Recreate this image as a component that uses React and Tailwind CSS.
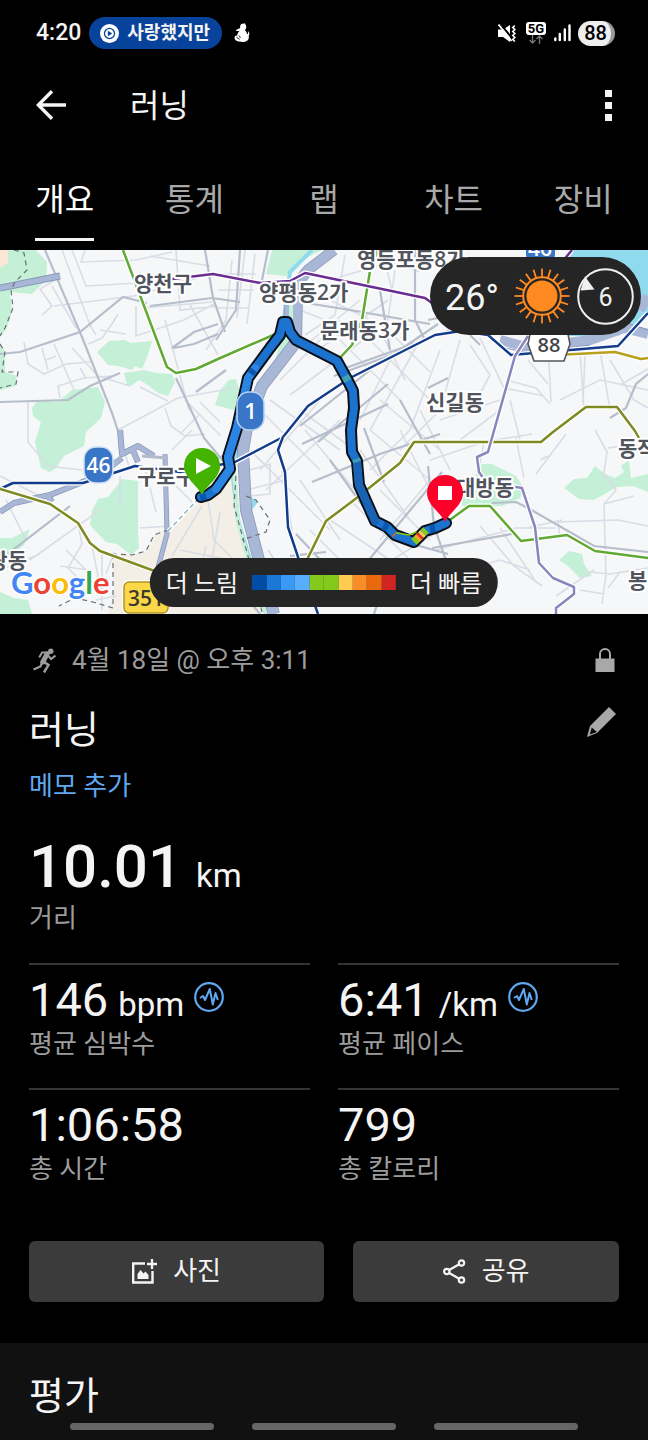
import React from "react";

const TABS = ["개요", "통계", "랩", "차트", "장비"];

const PACE_COLORS = [
  "bg-[#014da3]",
  "bg-[#1c78d6]",
  "bg-[#3a99f4]",
  "bg-[#58adff]",
  "bg-[#82cb1c]",
  "bg-[#82cb1c]",
  "bg-[#fdcc50]",
  "bg-[#f88e28]",
  "bg-[#e9690f]",
  "bg-[#d02522]",
];

const SUN_RAYS = Array.from({ length: 20 }, (_, i) => i * 18);

const ROUTE =
  "M201 247 L208 245 L216 239 L230 219 L228 207 L237 178 L248 128 L270 98 L280 85 L283 72 L287 72 L290 82 L296 90 L337 111 L348 131 L353 141 L354 158 L351 180 L352 202 L357 211 L359 235 L367 253 L375 271 L387 277 L395 285 L414 292 L425 281 L435 278 L446 273";

function StatusBar() {
  return (
    <div className="flex h-[66px] items-center justify-between pr-[33px] pl-9">
      <div className="flex items-center">
        <span className="text-[23px] font-medium">4:20</span>
        <span className="ml-2 flex h-8 items-center gap-2 rounded-full bg-[#07429b] pr-3 pl-[11px]">
          <svg className="size-[19px]" viewBox="0 0 20 20" aria-hidden="true">
            <circle cx="10" cy="10" r="10" fill="#fff" />
            <circle cx="10" cy="10" r="5.3" fill="none" stroke="#07429b" strokeWidth="1.3" />
            <path d="M8.3 7.2v5.6l4.6-2.8z" fill="#07429b" />
          </svg>
          <span className="text-lg leading-6 font-bold">사랑했지만</span>
        </span>
        <svg className="ml-3 h-5 w-[17px]" viewBox="0 0 17 20" aria-hidden="true">
          <path
            d="M6.2 2.4 7.5.8 9 .7 10.8.3 12 2.5c.8 2-.1 3.6-1.2 4.8 1.4 1 2.2 2.3 2.2 4.2 1.2-.7 1.4-1.8.8-3.4 1.8 1 2 3.4.9 5.1.8 3-1.6 5.8-6 5.8-5.2 0-8.2-1.8-8.2-4.2 0-1.6 1.2-2.3 2.8-2.2 0-1.8.8-3.2 2.2-4.5L2.5 8.1 1.9 7l4.2-1.9z"
            fill="#fff"
          />
          <path d="m2.4 14.2 3.3 2.2M5 12.5l1.5 2.5" stroke="#000" strokeWidth=".8" />
        </svg>
      </div>
      <div className="flex items-center">
        <svg className="h-[19px] w-[18px]" viewBox="0 0 18 19" aria-hidden="true">
          <path d="M0 5.500h5L12 1v17l-7-5H0z" fill="#fff" />
          <path d="M1.500-1 16 16.500" stroke="#000" strokeWidth="2" />
          <path d="m.5.5 13 16.500" stroke="#fff" strokeWidth="1.800" />
          <path d="m16.800 1.500-2 2 2 2-2 2 2 2-2 2 2 2-2 2 2 2" fill="none" stroke="#fff" strokeWidth="1.700" />
        </svg>
        <span className="ml-2.5 flex flex-col items-center">
          <span className="rounded-[3px] bg-white px-0.5 text-[13px] leading-[13px] font-bold text-black">
            5G
          </span>
          <svg className="h-[9px] w-[14px]" viewBox="0 0 14 9" aria-hidden="true">
            <path
              d="M3.5 0v8M.5 5l3 3 3-3M10.5 9V1M7.5 4l3-3 3 3"
              fill="none"
              stroke="#777"
              strokeWidth="1.3"
            />
          </svg>
        </span>
        <svg className="ml-2 h-[18px] w-[17px]" viewBox="0 0 17 18" aria-hidden="true">
          <path
            d="M1.3 14.5V16M5.8 10v6M10.800 5.500V16M15.500 1.500V16"
            stroke="#fff"
            strokeWidth="2.4"
            strokeLinecap="round"
          />
        </svg>
        <span className="ml-[7px] flex h-[25px] w-[37px] items-center justify-center rounded-full border-r-4 border-[#999] bg-[#eee] pl-0.5 text-[20px] font-medium text-black">
          88
        </span>
      </div>
    </div>
  );
}

function AppBar() {
  return (
    <header className="flex h-[78px] items-center">
      <button type="button" aria-label="뒤로" className="ml-9">
        <svg className="size-[30px]" viewBox="0 0 30 30" fill="none" stroke="#f4f4f4" strokeWidth="3.4">
          <path d="M30 15H3M16 1.3 2.3 15 16 28.7" />
        </svg>
      </button>
      <h1 className="ml-16 pt-0.5 text-[32px] leading-[48px]">러닝</h1>
      <button type="button" aria-label="더보기" className="mr-9 ml-auto flex flex-col gap-[5px]">
        <span className="size-[7px] bg-[#f4f4f4]" />
        <span className="size-[7px] bg-[#f4f4f4]" />
        <span className="size-[7px] bg-[#f4f4f4]" />
      </button>
    </header>
  );
}

function Tabs() {
  return (
    <nav className="flex pt-9 pb-[9px]">
      {TABS.map((tab, i) => (
        <button
          key={tab}
          type="button"
          aria-current={i === 0 ? "page" : undefined}
          className="flex flex-1 justify-center"
        >
          <span
            className={
              i === 0
                ? "border-b-[3px] border-[#f4f4f4] pb-[18px] text-[32px] leading-10 text-white"
                : "border-b-[3px] border-transparent pb-[18px] text-[32px] leading-10 text-[#a8a8a8]"
            }
          >
            {tab}
          </span>
        </button>
      ))}
    </nav>
  );
}

function MapDrawing() {
  return (
    <svg
      className="block h-[364px] w-full"
      viewBox="0 0 648 364"
      preserveAspectRatio="xMidYMid slice"
      role="img"
      aria-label="러닝 경로 지도"
    >
      <rect width="648" height="364" fill="#f6f7f8" />

      {/* Commercial district */}
      <path
        d="M201 248 L232 222 L236 262 L246 310 L262 364 H108 L114 340 L112 304 L132 305 L144 303 L152 292 L158 281 L170 282z"
        fill="#f4efe6"
      />
      <path d="M0 0h12l-4 14-8 6z" fill="#fbe6d6" />

      {/* Parks */}
      <g fill="#c3f0d6">
        <path d="M8 0h28l11 12-1 18-14 14-22-2 2 20-6 18-6 6V18l8-5z" />
        <path d="M0 92l5 10v20l12 4-2 10-15 4z" />
        <path d="M97 102l12-11 16-1 5 3 22-2-4 14-6 14-7-3-3 4-14-4-10-1z" />
        <path d="M124 123l20-3 12 3 16 1 3 8-7 14-10-3-10-8-9-5-8 6-4-1z" />
        <path d="M32 158l6-8 20 2 14-12 26-3 7 15-4 16-15 14-2 14-20 10-8 12-6 4-9-4-6-26 6-20-8-6z" />
        <path d="M92 261l6-12 10-2 14-18 16 2v52l1 15-8 7-14-11-11-2-16-17z" />
        <path d="M0 288l12 0 18-9-6 16-12 10-12-2z" />
        <path d="M220 140l9-10 7-1 3 10-2 22-22-6z" />
        <path d="M272 0h50l-24 12-12 14-20-2z" />
        <path d="M290 55l4-4 3 38-14 20-10 8 6-20 8-20z" />
        <path d="M463 248l19-34 10 0 24 12 8 12-4 10-18 8-40 0z" />
        <path d="M564 238l10-9 13-1 8-12 10 8 10 4 9-6-3-6 8-6 2 18 17-4v18l-15-6-16 1-14 8-10 5-14-1z" />
        <path d="M559 310l10-9 13 3 2 10 8 12-12 2-12-12z" />
        <path d="M0 342l14 6 14 2 4 14H0z" />
      </g>

      {/* Minor streets */}
      <g fill="none" stroke="#d8dde6" strokeWidth="1.6">
        <path d="M62 0l28 75 6 10M72 0l14 36 106 -6M85 0l-4 12 55-2 36-8M60 27L40 39l12 17-10 9M52 36l24 42M54 56l80 -10 70-20M150 6l60 10M176 0l4 60 38-4M136 56v30l48-16 30-16M165 70l24 90M190 55l28 50M118 64l-6 10-10 14-14 6M100 80l26 4M24 92l4 22 16 10 22-10 24 -2M42 98l6 22M54 94l20 46M46 110l10-4M72 98l26 28 32 10M60 148l-2-12 26-8 28-2M80 118l6 10M28 150v42l20 24 34 4M118 180l60-32 56 -10M140 137l28 14M165 158l6 18 14 10 20-2M185 150l36 36M200 152l20 20M142 58l70-6" />
        <path d="M232 10l-6 60-20 30M245 0l-8 68M255 4l-8 70M222 24h34M218 40h36M216 58h32M325 0l-20 30M300 20l30 10 60-18 30 10M345 5l-10 60-30 20M382 0l10 40 40 10M395 20l-10 70 20 40M300 60l50 20M310 40l80 40M300 100l60-50M318 100l70-50M340 90l60 60M360 80l70 70M380 72l50 50M280 130l60-60M290 145l80-60M300 160l60 44M270 150l70 50M260 160l60 60M250 200l80 80M320 150l-60 70M340 170l-74 70M305 180l50 60M390 110l-30 60M420 90l-50 90M440 100l-30 80-40 40M460 90l-20 70-40 40M370 180l60 50M380 150l60 50M360 200l50 70M400 180l30 60M420 160l30 60M350 250l60 60M380 240l50 50M330 270l60 40M300 230l40 60M310 280l40 40M430 230l-50 60M440 280l-80 50" />
        <path d="M470 95l20 30-16 30M480 88l24 50 40 8M506 130l30 8 14 16M528 110l20 24M549 112l2 40M585 104l-2 50M560 150l40-20 48 10M610 110l24 40 14 8M600 100l10 60M620 135l28 -16M500 160l-40 30M510 150l10 40M440 170l60-20M538 0v30M566 184l-30 40M580 100l4 60M595 180l12 22-4 26M622 196l-14 2M604 224l12 16-12 14 2 74M604 254l30 -8M540 210l8-4M480 214l4-22 48-8M430 210l60-20M524 228l-8-40M436 300l80-22 40 0M526 278l36-8M500 278l36 54M480 276l34 40 28 20M430 330l70-20 30 10M556 346l38-26M590 322l20 2 38 -6M606 324l-4 30M620 322l-12 16M580 340l24 4M560 288l-2-16 60-2 30 6" />
        <path d="M0 226l40 20M6 250l20 40M78 274l4 20-14 24 10 10M66 300l26 26M92 296l10 50M102 300v60M96 350l20-4M106 324l8-22M60 316l28 4M0 320l40-16M130 220l-6-20M120 226v30M30 310l70-50M146 222l10 40M140 278l30-2M172 200l20-20M180 184l20-20M170 230l24 24M208 250l6 40 20 20M202 256l-30 50M180 300l50 10M206 296l-12 50M220 262l-10 60 20 20M246 240l40-10M250 220l20-6v30l-20 2M282 220l10 60M268 300l20 30" />
      </g>

      {/* Main streets */}
      <g fill="none" stroke="#b6becb" strokeWidth="2.2">
        <path d="M45 0l37 87 30 76 6 18M0 104l20-2 60-20 43-35 24 6M150 56l62-8 28 4M205 0l8 48 12 34M0 152l68-2 22-14 30-13M172 98l22-16 24-8M174 98l20-4 24-10M176 128l28 60 30 36M196 142l30-22" />
        <path d="M240 0l-4 60-20 30M268 0l-6 30M300 52l50 8 80 14M415 0l0 70 10 20M340 120l90-32 20-8M334 126l60-22 44-30M300 176l70-56M318 192l70-58M244 196l-30 14-14 20M302 194l86-40M312 232l68-28 60-20M364 178l20 54M330 210l40 56M400 150l30 54M380 40l10 60M290 306l36-4M296 284l32 34M362 318l80-96M398 290l50 14M432 298l80-14M428 216l6 60 14 40M492 253l24-1 12 6 66 38 54 6M610 168l16-10 10-24 12-10M428 138l20-10M428 70l40 -8M260 364l-10-12M374 364l8-24M0 310l70-54M470 85l10 10" />
      </g>

      {/* Expressways */}
      <g fill="none" stroke="#8a97b8" strokeLinejoin="round">
        <path d="M0 38l60-12" strokeWidth="7" />
        <path d="M0 38l60-12" stroke="#a9b7d6" strokeWidth="5" />
        <path d="M0 262l14-9 36-8 50-20 22-17M120 180l2 24 16-8 16 10M132 198l6 14M48 246l4 6" strokeWidth="6" />
        <path d="M0 262l14-9 36-8 50-20 22-17M120 180l2 24 16-8 16 10M132 198l6 14M48 246l4 6" stroke="#a9b7d6" strokeWidth="4.5" />
        <path d="M165 204l2 80-8 30-4 20" strokeWidth="5" />
        <path d="M165 204l2 80-8 30-4 20" stroke="#a9b7d6" strokeWidth="3.6" />
        <path d="M142 206l26 2" stroke="#b3bbc9" strokeWidth="3" />
      </g>

      {/* Stream beside the riverside road */}
      <path d="M312 0l-22 22-4 26-2 26M238 200l-6 20 6 50 12 40 16 54" fill="none" stroke="#90daee" strokeWidth="4" />
      <path d="M234 222l4 50 12 44 16 48" fill="none" stroke="#c3f0d6" strokeWidth="4" />
      <path d="M250 246l8 6-6 8z" fill="#90daee" />
      <path d="M334 0l-26 20-16 20-4 34" fill="none" stroke="#8a97b8" strokeWidth="11" />
      <path d="M334 0l-26 20-16 20-4 34" fill="none" stroke="#a9b7d6" strokeWidth="9.5" />
      <path d="M297 40l-1 52-34 44-14 36-5 28 3 60 14 54 14 50" fill="none" stroke="#8a97b8" strokeWidth="12" strokeLinejoin="round" />
      <path d="M297 40l-1 52-34 44-14 36-5 28 3 60 14 54 14 50" fill="none" stroke="#a9b7d6" strokeWidth="10.5" strokeLinejoin="round" />
      <path d="M291 52v30" stroke="#c3f0d6" strokeWidth="4" />

      {/* River in the north-east */}
      <path d="M570 0h78v66l-30 20h-60z" fill="#90daee" />
      <path d="M500 90l30 8 60-8 34-12 24 6M640 60l8-14" fill="none" stroke="#a9b7d6" strokeWidth="10" />
      <path d="M500 97l30 6 60-8M624 72l24 8" fill="none" stroke="#8a97b8" />

      {/* Administrative boundaries */}
      <path
        d="M14 0l10 3 3 17-12 12-4 8 2 18-8 20-5 8M0 94l5 8-3 20h16l-2 12-16 4M112 304l20 1 14-4 8-16 14-5M113 304v54l-20-6-18-4-16 8M236 226l-2 30 14 50 14 56M246 246l10 4 14 20-4 12-24 8"
        fill="none"
        stroke="#686f77"
        strokeWidth="1.2"
        strokeDasharray="5 4"
      />
      <path d="M168 281l32-34" fill="none" stroke="#fff" strokeWidth="4" />
      <path d="M168 281l32-34" fill="none" stroke="#8fb8c8" strokeWidth="1.5" strokeDasharray="5 3" />

      {/* Transit lines */}
      {[
        ["#61a932", "M123 0 L167 117 L176 123 L196 119 L218 109 L280 82"],
        ["#61a932", "M378 0 L370 21 L362 70 L352 95 L337 111"],
        ["#61a932", "M447 272 L469 256 L490 256 L521 291 L567 285 L595 301 L648 308"],
        ["#6a2d91", "M172 29 L213 24 L260 33 L290 31 L305 23 L425 48 L436 56"],
        ["#6a2d91", "M572 0 L562 12"],
        ["#143c8c", "M0 239 L13 233 L83 233 L135 216 L180 222 L235 212 L283 187 L308 156 L350 128 L435 85 L461 81 L488 85 L511 105 L618 96 L648 63"],
        ["#143c8c", "M283 187 L278 200 L285 222 L288 277 L300 313 L318 364"],
        ["#7f8a22", "M0 239 L50 254 L78 273 L90 293 L100 301 L160 323"],
        ["#7f8a22", "M300 324 L326 271 L358 247 L400 213 L414 192 L541 192 L553 182 L586 157 L617 157 L635 181 L648 204"],
        ["#b8a01e", "M556 105 L615 102 L641 109 L648 108"],
        ["#8b85bd", "M528 86 L515 106 L488 202 L477 207 L479 222 L486 232 L522 238 L535 277 L539 313 L553 328 L574 337 L574 344 L556 358 L556 364"],
      ].map(([color, d]) => (
        <g key={d} fill="none" strokeLinejoin="round">
          <path d={d} stroke="#fff" strokeWidth="5" />
          <path d={d} stroke={color} strokeWidth="2.5" />
        </g>
      ))}

      {/* Road shields */}
      <g fontFamily="'Open Sans', sans-serif" fontWeight="600" textAnchor="middle">
        <rect x="526" y="-28" width="29" height="36" rx="3" fill="#3a76c8" />
        <text x="540" y="6" fontSize="21" fill="#fff">46</text>
        <path d="M530 84h38l2 10-6 17h-30l-6-17z" fill="#fff" stroke="#555" strokeWidth="1.6" />
        <text x="549" y="102" fontSize="20" fill="#444">88</text>
        <rect x="84" y="197" width="29" height="36" rx="12" fill="#3a76c8" stroke="#cfe0f7" strokeWidth="1.6" />
        <text x="98.5" y="223" fontSize="21" fill="#fff">46</text>
        <rect x="124" y="332" width="44" height="31" rx="5" fill="#fbd84a" stroke="#fff" strokeWidth="4" />
        <rect x="124" y="332" width="44" height="31" rx="5" fill="#fbd84a" stroke="#b0942a" strokeWidth="1.5" />
        <text x="146" y="356" fontSize="21" fill="#3c3c2c">351</text>
      </g>

      {/* Place names */}
      <g
        fill="#50555d"
        stroke="#fff"
        strokeWidth="4"
        strokeLinejoin="round"
        paintOrder="stroke"
        fontFamily="'Open Sans', 'Noto Sans CJK KR', sans-serif"
        fontWeight="600"
        fontSize="21"
      >
        <text x="134" y="41">양천구</text>
        <text x="357" y="17">영등포동8가</text>
        <text x="259" y="50">양평동2가</text>
        <text x="320" y="88">문래동3가</text>
        <text x="426" y="160">신길동</text>
        <text x="137" y="234">구로구</text>
        <text x="456" y="245">대방동</text>
        <text x="618" y="206">동작</text>
        <text x="628" y="338">봉</text>
        <text x="27" y="318" textAnchor="end">광동</text>
      </g>

      {/* Recorded route, tinted by pace */}
      <g fill="none" strokeLinejoin="round" strokeLinecap="round">
        <path d={ROUTE} stroke="#0a0f18" strokeWidth="12" />
        <path d={ROUTE} stroke="#1c73cf" strokeWidth="8" />
        <path d="M216 239L230 219L228 207L237 178L248 128L255 118" stroke="#2b85e2" strokeWidth="8" />
        <path d="M357 214L359 235L367 253L375 271" stroke="#1a62b4" strokeWidth="8" />
        <g strokeLinecap="butt" strokeWidth="8">
          <path d="M200 247L206 246M251 124l3-4M383 276l5 2M430 279l5-1" stroke="#0b55aa" />
          <path d="M345 126l3 5M356 209l1 3" stroke="#3fa0b0" />
          <path d="M414 292l4-4" stroke="#82cb1c" />
          <path d="M417 289l3-3" stroke="#f8a030" />
          <path d="M419 287l2-2" stroke="#e03a20" />
          <path d="M421 285l2-2" stroke="#fdcc50" />
          <path d="M423 283l3-3" stroke="#82cb1c" />
          <path d="M394 284l1 1" stroke="#e9690f" strokeWidth="6" />
        </g>
        <path d="M397 283l12 2 7-3" stroke="#82cb1c" strokeWidth="1.5" />
      </g>

      <g fontFamily="'Open Sans', sans-serif" fontWeight="600" textAnchor="middle">
        <rect x="237" y="142" width="27" height="38" rx="12" fill="#3a76c8" stroke="#b9d3f3" strokeWidth="1.5" />
        <text x="250.5" y="169" fontSize="22" fill="#fff">1</text>
      </g>

      {/* Start and finish pins */}
      <path d="M202 245c-4-9-18-17-18-29a18 18 0 0 1 36 0c0 12-14 20-18 29z" fill="#43b300" />
      <path d="M196 208v16l15-8z" fill="#fff" />
      <path d="M445 272c-4-9-18-17-18-29a18 18 0 0 1 36 0c0 12-14 20-18 29z" fill="#fb0029" />
      <path d="M438 236h14v14h-14z" fill="#fff" />

      <text
        x="11"
        y="344"
        fontFamily="Lato, sans-serif"
        fontSize="31"
        fontWeight="700"
        stroke="#fff"
        strokeWidth="3"
        paintOrder="stroke"
      >
        <tspan fill="#4285f4">G</tspan>
        <tspan fill="#ea4335">o</tspan>
        <tspan fill="#fbbc05">o</tspan>
        <tspan fill="#4285f4">g</tspan>
        <tspan fill="#34a853">l</tspan>
        <tspan fill="#ea4335">e</tspan>
      </text>
    </svg>
  );
}

function RouteMap() {
  return (
    <section className="relative overflow-hidden">
      <MapDrawing />
      <div className="absolute top-[7px] right-[7px] flex h-[78px] w-[211px] items-center rounded-full bg-[#252525] pl-[15px]">
        <span className="w-[54px] pt-1 text-4xl">26°</span>
        <svg className="ml-3.5 size-[58px]" viewBox="-29 -29 58 58" aria-hidden="true">
          <circle r="15.5" fill="#ff8a22" />
          <circle r="18.8" fill="none" stroke="#ff8a22" strokeWidth="2" />
          {SUN_RAYS.map((angle) => (
            <path
              key={angle}
              d="M0-19v-8.500"
              stroke="#ff8a22"
              strokeWidth="1.8"
              transform={`rotate(${angle})`}
            />
          ))}
        </svg>
        <svg className="ml-1.5 size-[57px]" viewBox="-28.5 -28.5 57 57" role="img" aria-label="바람">
          <circle r="27.3" fill="none" stroke="#f0f0f0" strokeWidth="2" />
          <path d="M-20.500-20l-4.500 14 14-1z" fill="#f0f0f0" />
          <text y="9" textAnchor="middle" fontSize="25" fill="#f0f0f0">6</text>
        </svg>
      </div>
      <div className="absolute bottom-[7px] left-1/2 flex h-[49px] -translate-x-1/2 items-center gap-3.5 rounded-full bg-[#252525] px-4 text-2xl whitespace-nowrap">
        <span className="pt-0.5">더 느림</span>
        <span className="flex h-[15px] w-36">
          {PACE_COLORS.map((color, i) => (
            <span key={i} className={`flex-1 ${color}`} />
          ))}
        </span>
        <span className="pt-0.5">더 빠름</span>
      </div>
    </section>
  );
}

function PulseIcon() {
  return (
    <svg className="ml-2.5 size-[30px]" viewBox="-15 -15 30 30" fill="none" stroke="#5fa8f0" aria-hidden="true">
      <circle r="13.8" strokeWidth="2.2" />
      <path d="M-9 1l3-2 2 4L.8-8l3 15.500L6.500-4 8.800 3" strokeWidth="2" strokeLinejoin="round" />
    </svg>
  );
}

function Stat({ value, unit, label, pulse }) {
  return (
    <div className="border-t-2 border-[#353535] pt-[9px] pb-[26px]">
      <div className="flex h-[52px] items-baseline">
        <span className="text-[47px] leading-[52px]">{value}</span>
        {unit && <span className="ml-2.5 text-[33px] leading-10">{unit}</span>}
        {pulse && (
          <span className="self-start pt-2">
            <PulseIcon />
          </span>
        )}
      </div>
      <div className="text-[26px] leading-9 text-[#9c9c9c]">{label}</div>
    </div>
  );
}

function Summary() {
  return (
    <main className="px-[29px] pt-7">
      <div className="flex h-9 items-center text-[26px] text-[#9c9c9c]">
        <svg className="ml-1 h-[25px] w-[23px]" viewBox="0 0 23 25" fill="none" stroke="#9c9c9c" aria-hidden="true">
          <circle cx="17.8" cy="3.2" r="2.7" fill="#9c9c9c" stroke="none" />
          <path d="M14.2 5.8 9.8 14" strokeWidth="5" strokeLinecap="round" />
          <path d="M14 4.500H9L6.200 9.500M15.500 8l2.500 3 4.500-3.500" strokeWidth="2" />
          <path d="m11 14 4.500 3L11 24.500" strokeWidth="2.5" />
          <path d="M9 14.500 7.500 18.500.5 21.500" strokeWidth="2.2" />
        </svg>
        <span className="ml-4">4월 18일 @ 오후 3:11</span>
        <svg className="mr-1 ml-auto h-6 w-5" viewBox="0 0 20 24" aria-hidden="true">
          <path d="M.5 10.500h19V24H.5z" fill="#a8a8a8" />
          <path d="M5 11V6a5 5 0 0 1 10 0v5" fill="none" stroke="#a8a8a8" strokeWidth="2" />
        </svg>
      </div>

      <div className="mt-7 flex h-12 items-start justify-between">
        <h2 className="text-[38px] leading-[48px]">러닝</h2>
        <button type="button" aria-label="이름 편집" className="mr-0.5">
          <svg className="size-8" viewBox="0 0 32 32">
            <path d="m24 1 7 7-19 19L2 31 5 20z" fill="#a8a8a8" />
            <path d="m6.800 21.500 5 4.500-7 2.500z" fill="#000" />
          </svg>
        </button>
      </div>
      <a href="#memo" className="mt-3.5 block text-[26px] leading-9 text-[#5fa8f0]">
        메모 추가
      </a>

      <div className="mt-[30px] flex items-baseline">
        <span className="text-[60px] leading-[66px] font-medium">10.01</span>
        <span className="ml-3.5 text-[33px] leading-10">km</span>
      </div>
      <div className="text-[26px] leading-9 text-[#9c9c9c]">거리</div>

      <div className="mt-[27px] grid grid-cols-2 gap-x-7">
        <Stat value="146" unit="bpm" label="평균 심박수" pulse />
        <Stat value="6:41" unit="/km" label="평균 페이스" pulse />
        <Stat value="1:06:58" label="총 시간" />
        <Stat value="799" label="총 칼로리" />
      </div>

      <div className="mt-7 mb-[41px] flex gap-[29px]">
        <button
          type="button"
          className="flex h-[61px] flex-[10] items-center justify-center gap-4 rounded-md bg-[#3b3b3b] text-[26px]"
        >
          <svg className="size-[25px]" viewBox="0 0 25 25" aria-hidden="true">
            <path d="M13 4.500H1.200V23.500H20.500V12" fill="none" stroke="#f4f4f4" strokeWidth="2.4" />
            <path d="M20 0v10M15 5h10" stroke="#f4f4f4" strokeWidth="2.3" />
            <path d="M5.500 20v-5l3-4 3 3.500 2-2 3 3.500v4z" fill="#f4f4f4" />
          </svg>
          사진
        </button>
        <button
          type="button"
          className="flex h-[61px] flex-[9] items-center justify-center gap-4 rounded-md bg-[#3b3b3b] text-[26px]"
        >
          <svg className="h-[25px] w-[23px]" viewBox="0 0 23 25" fill="none" stroke="#f4f4f4" strokeWidth="2.2" aria-hidden="true">
            <circle cx="3.8" cy="12.5" r="2.7" />
            <circle cx="18.5" cy="4" r="2.7" />
            <circle cx="18.5" cy="21" r="2.7" />
            <path d="m6.200 11 10-5.700M6.200 14l10 5.700" />
          </svg>
          공유
        </button>
      </div>
    </main>
  );
}

export default function App() {
  return (
    <div className="min-h-screen bg-black font-['Roboto','Noto_Sans_CJK_KR',sans-serif] text-[#f4f4f4]">
      <StatusBar />
      <AppBar />
      <Tabs />
      <RouteMap />
      <Summary />
      <section className="h-[70px] overflow-hidden bg-[#111] px-[29px] pt-7">
        <h2 className="text-[38px] leading-[50px]">평가</h2>
      </section>
      <div className="flex h-[27px] justify-center gap-[38px] bg-[#111] pt-2.5">
        <span className="h-[7px] w-36 rounded-full bg-[#666]" />
        <span className="h-[7px] w-36 rounded-full bg-[#666]" />
        <span className="h-[7px] w-36 rounded-full bg-[#666]" />
      </div>
    </div>
  );
}
